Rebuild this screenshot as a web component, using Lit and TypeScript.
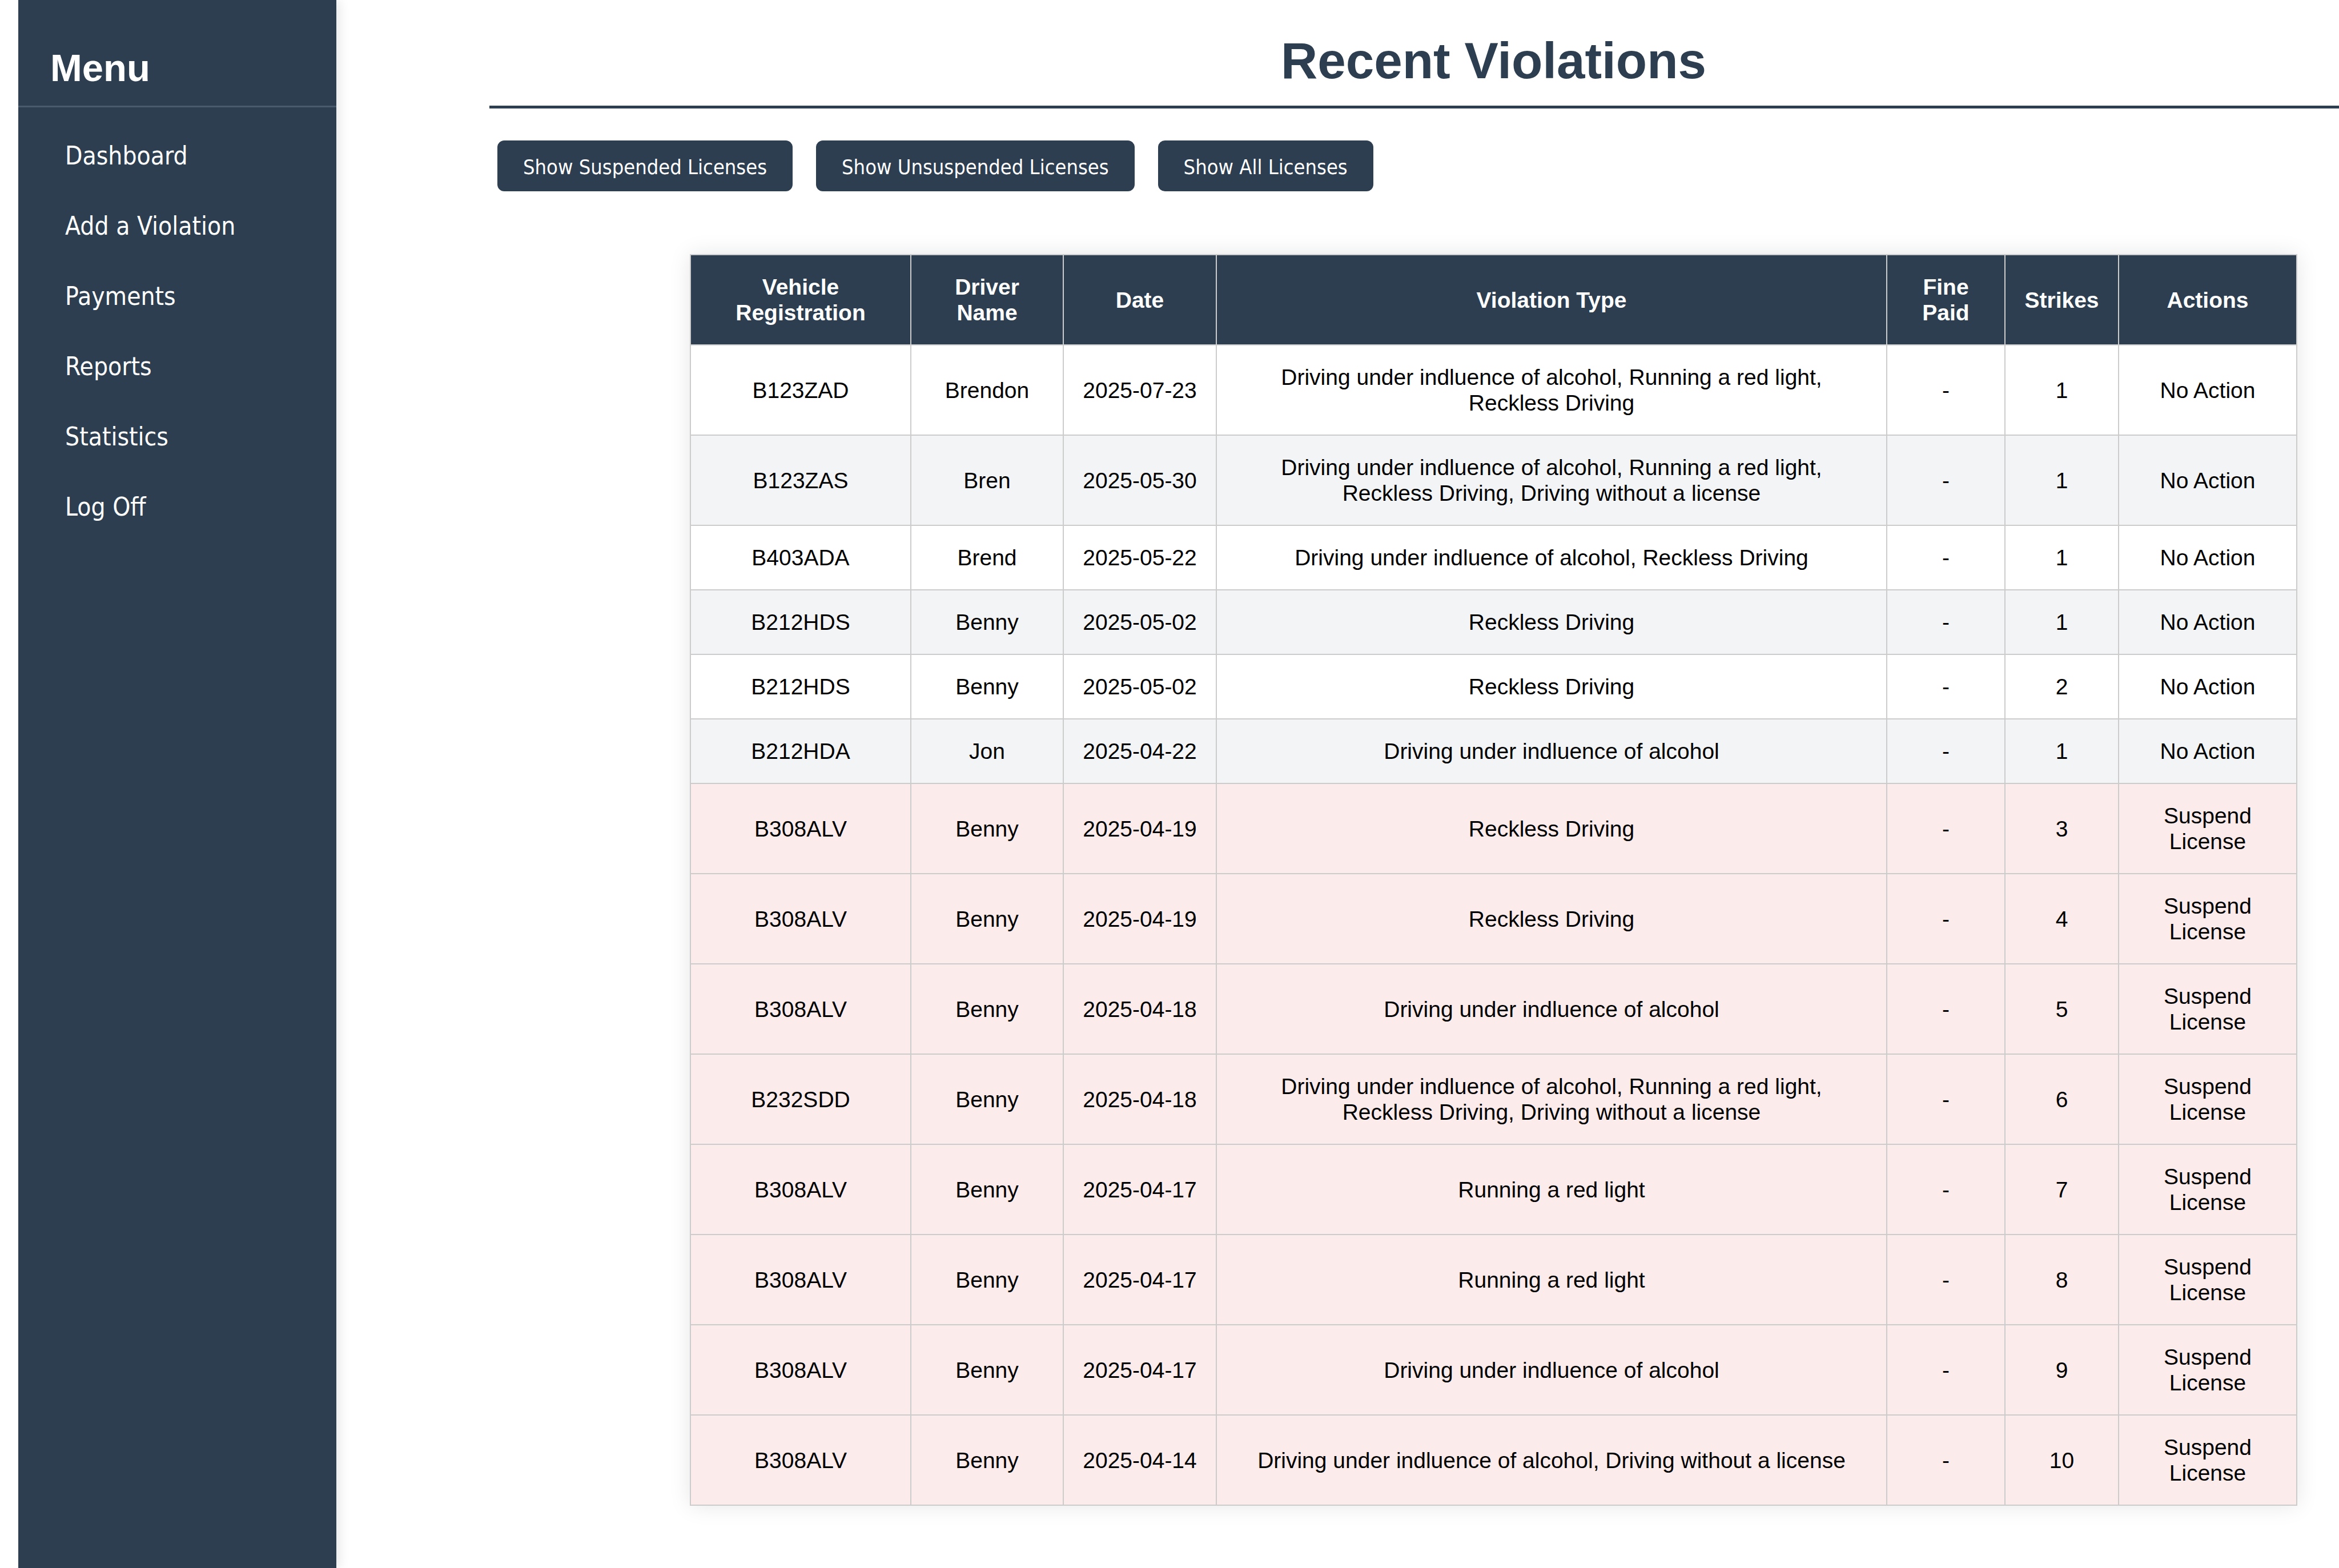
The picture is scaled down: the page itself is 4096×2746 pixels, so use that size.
import { LitElement, html, css } from "lit";
import { customElement, property } from "lit/decorators.js";
import { classMap } from "lit/directives/class-map.js";

interface Violation {
  registration: string;
  driver: string;
  date: string;
  type: string;
  finePaid: string;
  strikes: number;
}

const ALCOHOL = "Driving under indluence of alcohol";
const RED_LIGHT = "Running a red light";
const RECKLESS = "Reckless Driving";
const NO_LICENSE = "Driving without a license";

/* Number of strikes from which a license is up for suspension. */
const SUSPEND_FROM = 3;

const row = (
  registration: string,
  driver: string,
  date: string,
  strikes: number,
  ...types: string[]
): Violation => ({ registration, driver, date, strikes, type: types.join(", "), finePaid: "-" });

const VIOLATIONS: Violation[] = [
  row("B123ZAD", "Brendon", "2025-07-23", 1, ALCOHOL, RED_LIGHT, RECKLESS),
  row("B123ZAS", "Bren", "2025-05-30", 1, ALCOHOL, RED_LIGHT, RECKLESS, NO_LICENSE),
  row("B403ADA", "Brend", "2025-05-22", 1, ALCOHOL, RECKLESS),
  row("B212HDS", "Benny", "2025-05-02", 1, RECKLESS),
  row("B212HDS", "Benny", "2025-05-02", 2, RECKLESS),
  row("B212HDA", "Jon", "2025-04-22", 1, ALCOHOL),
  row("B308ALV", "Benny", "2025-04-19", 3, RECKLESS),
  row("B308ALV", "Benny", "2025-04-19", 4, RECKLESS),
  row("B308ALV", "Benny", "2025-04-18", 5, ALCOHOL),
  row("B232SDD", "Benny", "2025-04-18", 6, ALCOHOL, RED_LIGHT, RECKLESS, NO_LICENSE),
  row("B308ALV", "Benny", "2025-04-17", 7, RED_LIGHT),
  row("B308ALV", "Benny", "2025-04-17", 8, RED_LIGHT),
  row("B308ALV", "Benny", "2025-04-17", 9, ALCOHOL),
  row("B308ALV", "Benny", "2025-04-14", 10, ALCOHOL, NO_LICENSE),
];

@customElement("side-menu")
export class SideMenu extends LitElement {
  static styles = css`
    :host {
      display: block;
      background: #2c3e50;
      color: #fff;
      box-shadow: 5px 0 18px rgba(0, 0, 0, 0.1);
      clip-path: inset(0 -40px 0 0);
    }
    .heading {
      margin: 0;
      padding: 80px 56px 28px;
      border-bottom: 3px solid #485a6b;
      font: bold 67px/77px "Liberation Sans", Arial, sans-serif;
    }
    .links {
      list-style: none;
      margin: 0;
      padding: 23px 0;
    }
    .link {
      display: block;
      padding: 35px 82px;
      color: inherit;
      text-decoration: none;
      font: 44px/53px Tahoma, "DejaVu Sans Condensed", "Noto Sans", sans-serif;
    }
  `;

  @property({ attribute: false }) items: string[] = [];

  render() {
    return html`
      <h2 class="heading">Menu</h2>
      <nav>
        <ul class="links">
          ${this.items.map((item) => html`<li><a class="link" href="#">${item}</a></li>`)}
        </ul>
      </nav>
    `;
  }
}

@customElement("violations-table")
export class ViolationsTable extends LitElement {
  static styles = css`
    :host {
      display: block;
    }
    .table {
      width: 100%;
      table-layout: fixed;
      border-collapse: collapse;
      box-shadow: 0 0 36px rgba(0, 0, 0, 0.1);
      background: #fff;
      color: #000;
      font: 39px/45px "Liberation Sans", Arial, sans-serif;
      text-align: center;
    }
    .registration { width: 386px; }
    .driver { width: 267px; }
    .date { width: 268px; }
    .fine { width: 207px; }
    .strikes { width: 199px; }
    .actions { width: 312px; }
    .head,
    .cell {
      padding: 33px 32px;
      border: 2px solid #ccc;
      vertical-align: middle;
    }
    .head {
      background: #2c3e50;
      color: #fff;
      font-weight: bold;
    }
    .row:nth-child(even) {
      background: #f3f4f6;
    }
    .row.flagged {
      background: #fcebeb;
    }
  `;

  @property({ attribute: false }) rows: Violation[] = [];

  render() {
    return html`
      <table class="table">
        <colgroup>
          <col class="registration" />
          <col class="driver" />
          <col class="date" />
          <col />
          <col class="fine" />
          <col class="strikes" />
          <col class="actions" />
        </colgroup>
        <thead>
          <tr>
            <th class="head" scope="col">Vehicle Registration</th>
            <th class="head" scope="col">Driver Name</th>
            <th class="head" scope="col">Date</th>
            <th class="head" scope="col">Violation Type</th>
            <th class="head" scope="col">Fine Paid</th>
            <th class="head" scope="col">Strikes</th>
            <th class="head" scope="col">Actions</th>
          </tr>
        </thead>
        <tbody>
          ${this.rows.map((v) => {
            const flagged = v.strikes >= SUSPEND_FROM;
            return html`
              <tr class=${classMap({ row: true, flagged })}>
                <td class="cell">${v.registration}</td>
                <td class="cell">${v.driver}</td>
                <td class="cell">${v.date}</td>
                <td class="cell">${v.type}</td>
                <td class="cell">${v.finePaid}</td>
                <td class="cell">${v.strikes}</td>
                <td class="cell">${flagged ? "Suspend License" : "No Action"}</td>
              </tr>
            `;
          })}
        </tbody>
      </table>
    `;
  }
}

@customElement("app-root")
export class AppRoot extends LitElement {
  static styles = css`
    :host {
      display: block;
      background: #fff;
    }
    .page {
      display: grid;
      grid-template-columns: 557px minmax(0, 1fr);
      column-gap: 268px;
      min-height: 100vh;
      padding-left: 32px;
      box-sizing: border-box;
    }
    .title {
      margin: 0;
      padding: 55px 0 28px 278px;
      border-bottom: 5px solid #2c3e50;
      color: #2c3e50;
      font: bold 89px/102px "Liberation Sans", Arial, sans-serif;
      text-align: center;
    }
    .filters {
      display: flex;
      flex-wrap: wrap;
      gap: 41px;
      padding: 56px 14px 0;
    }
    .filter {
      margin: 0;
      padding: 24px 45px 20px;
      border: 0;
      border-radius: 12px;
      background: #2c3e50;
      color: #fff;
      font: 36px/45px Tahoma, "DejaVu Sans Condensed", "Noto Sans", sans-serif;
      cursor: pointer;
    }
    .records {
      padding: 110px 73px 0 351px;
    }
  `;

  private menu = ["Dashboard", "Add a Violation", "Payments", "Reports", "Statistics", "Log Off"];
  private filters = ["Show Suspended Licenses", "Show Unsuspended Licenses", "Show All Licenses"];

  render() {
    return html`
      <div class="page">
        <side-menu .items=${this.menu}></side-menu>
        <main>
          <h1 class="title">Recent Violations</h1>
          <div class="filters">
            ${this.filters.map((f) => html`<button class="filter" type="button">${f}</button>`)}
          </div>
          <div class="records">
            <violations-table .rows=${VIOLATIONS}></violations-table>
          </div>
        </main>
      </div>
    `;
  }
}
